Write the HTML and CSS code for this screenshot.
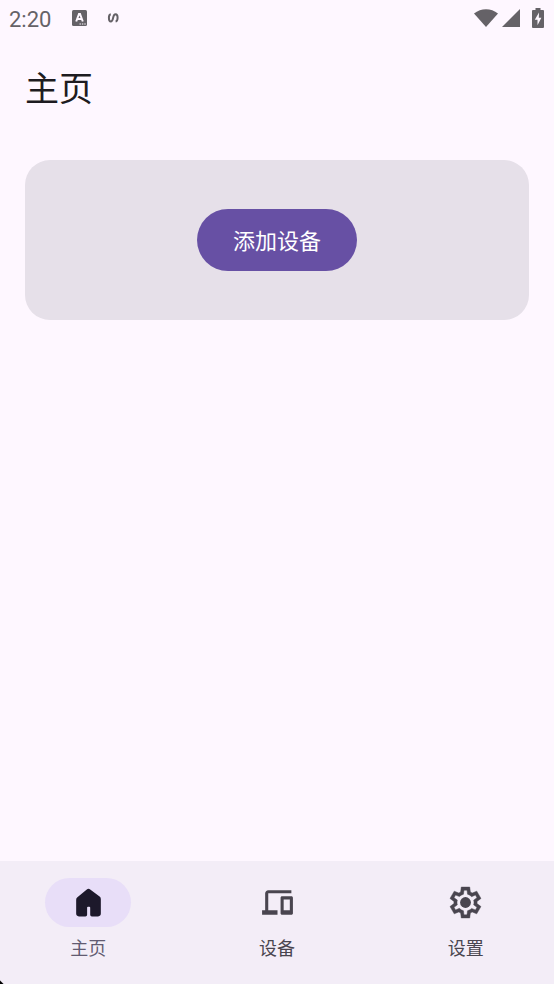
FILE: index.html
```html
<!DOCTYPE html>
<html lang="zh-CN">
<head>
<meta charset="utf-8">
<meta name="viewport" content="width=device-width, initial-scale=1">
<title>主页</title>
<link rel="stylesheet" href="styles.css">
</head>
<body>
<div class="status-bar">
  <span class="clock">2:20</span>
  <svg class="notice-app" viewBox="0 0 16 16" aria-hidden="true">
    <rect x="1" y="0" width="15" height="16" rx="1.5" fill="currentColor"/>
    <path d="M5.200 11.500 8 4h1L11.800 11.500M6.200 9h4.600" fill="none" stroke="#fef7ff" stroke-width="2"/>
    <path d="M8.500 14h1.400M10.900 14h1.400M13.300 14h1.400" stroke="#fef7ff" stroke-width="1.200"/>
  </svg>
  <svg class="notice-s" viewBox="0 0 12 10" aria-hidden="true">
    <path d="M3.800 1.200C2 1.400 1.900 3 1.900 4.800 1.900 7.200 2.500 8.500 3.800 8.500 5.400 8.500 5.700 7 6.100 4.900 6.500 2.800 7 1.300 8.600 1.300 10.200 1.300 10.600 2.900 10.600 4.800 10.600 7 10.300 8.200 8.600 8.500" fill="none" stroke="currentColor" stroke-width="2"/>
  </svg>
  <div class="indicators">
    <svg class="wifi" viewBox="0 0 24 18" aria-hidden="true"><path d="M0 4.500C7-1.300 17-1.300 24 4.500L12 18Z" fill="currentColor"/></svg>
    <svg class="signal" viewBox="0 0 18 18" aria-hidden="true"><path d="M18 0V18H0Z" fill="currentColor"/></svg>
    <svg class="battery" viewBox="0 0 12 20" aria-hidden="true"><path d="M3.500 0h5v2H11q1 0 1 1V19q0 1-1 1H1q-1 0-1-1V3q0-1 1-1h2.500Z" fill="currentColor"/><path d="M7 4.500 2.800 11.700H5.500V17.300L9.400 9.700H6.800Z" fill="#fef7ff"/></svg>
  </div>
</div>
<header class="top-bar"><h1>主页</h1></header>
<main>
  <section class="card"><button class="add-button" type="button">添加设备</button></section>
</main>
<nav class="nav-bar">
  <a class="nav-item active" href="#home" aria-current="page">
    <span class="indicator"><svg class="icon" viewBox="0 0 24 24" aria-hidden="true"><path d="M4 10.200Q4 9.200 4.800 8.600L10.900 3.500Q12 2.700 13.100 3.500L19.200 8.100Q20 8.700 20 9.700V19.200Q20 21 18.200 21H14.200Q13.100 21 13.100 19.900V15.300Q13.100 14.700 12.500 14.700H11.700Q11.100 14.700 11.100 15.300V19.900Q11.100 21 10 21H5.800Q4 21 4 19.200Z" fill="currentColor"/></svg></span>
    <span class="label">主页</span>
  </a>
  <a class="nav-item" href="#devices">
    <span class="indicator"><svg class="icon" viewBox="0 0 24 24" aria-hidden="true"><path fill="currentColor" fill-rule="evenodd" d="M2 20v-3h2V6c0-1.100.9-2 2-2h15v2H6v11h6v3ZM15 20c-.6 0-1-.4-1-1V9c0-.6.4-1 1-1h6c.6 0 1 .4 1 1v10c0 .6-.4 1-1 1ZM16 17h4v-7h-4Z"/></svg></span>
    <span class="label">设备</span>
  </a>
  <a class="nav-item" href="#settings">
    <span class="indicator"><svg class="icon" viewBox="0 0 24 24" aria-hidden="true"><path fill="currentColor" fill-rule="evenodd" d="M9.250 22l-.4-3.200c-.217-.083-.421-.183-.612-.3a8.300 8.300 0 0 1-.563-.375L4.700 19.375l-2.750-4.750 2.575-1.950A2.400 2.400 0 0 1 4.500 12.338v-.675c0-.108.008-.221.025-.338L1.950 9.375l2.750-4.750 2.975 1.250c.183-.133.375-.258.575-.375.2-.117.4-.217.6-.3l.4-3.200h5.500l.4 3.200c.217.083.421.183.613.3.191.117.379.242.562.375l2.975-1.250 2.750 4.750-2.575 1.950c.017.117.025.23.025.338v.675c0 .108-.017.22-.05.337l2.575 1.950-2.750 4.750-2.950-1.250a6.800 6.800 0 0 1-.575.375c-.2.117-.4.217-.6.3l-.4 3.200ZM11 20h1.975l.35-2.650c.517-.133.996-.329 1.438-.587a5.900 5.900 0 0 0 1.212-.938l2.475 1.025.975-1.700-2.150-1.625c.083-.233.142-.48.175-.738a6.200 6.200 0 0 0 0-1.575 3.600 3.600 0 0 0-.175-.737l2.150-1.625-.975-1.700-2.475 1.050a5.500 5.500 0 0 0-1.212-.963 5.800 5.800 0 0 0-1.438-.587L13 4h-1.975l-.35 2.650c-.517.133-.996.329-1.438.588a5.900 5.900 0 0 0-1.212.937L5.550 7.150l-.975 1.700 2.150 1.600c-.083.25-.142.5-.175.75a6.200 6.200 0 0 0 0 1.575c.033.25.092.5.175.75l-2.150 1.625.975 1.700 2.475-1.050c.383.4.787.72 1.212.963.442.258.921.454 1.438.587Z" stroke="currentColor" stroke-width="0.3"/><circle cx="12" cy="12" r="3.500" fill="currentColor"/></svg></span>
    <span class="label">设置</span>
  </a>
</nav>
</body>
</html>
```
FILE: styles.css
```css
* {
  box-sizing: border-box;
}

body {
  margin: 0;
  min-height: 100vh;
  display: flex;
  flex-direction: column;
  background: #fef7ff;
  color: #1d1b20;
  font-family: Roboto, "Noto Sans CJK SC", sans-serif;
}

.status-bar {
  display: flex;
  align-items: center;
  height: 36px;
  padding: 0 10px 0 9px;
  color: #656267;
}

.clock {
  padding-top: 3px;
  font-size: 22px;
  line-height: 36px;
}

.notice-app {
  width: 16px;
  height: 16px;
  margin-left: 20px;
}

.notice-s {
  width: 12px;
  height: 10px;
  margin-left: 20px;
}

.indicators {
  display: flex;
  align-items: center;
  margin-left: auto;
}

.wifi {
  width: 24px;
  height: 18px;
}

.signal {
  width: 18px;
  height: 18px;
  margin-left: 4px;
}

.battery {
  width: 12px;
  height: 20px;
  margin-left: 12px;
}

.top-bar {
  display: flex;
  align-items: center;
  height: 100px;
  padding: 6px 25px 0;
}

h1 {
  margin: 0;
  font-size: 34px;
  font-weight: 400;
  line-height: 44px;
}

main {
  flex: 1;
  padding: 24px 25px;
}

.card {
  display: flex;
  justify-content: center;
  padding: 49px 24px;
  border-radius: 25px;
  background: #e6e0e9;
}

.add-button {
  height: 62px;
  padding: 0 36px 2px;
  border: 0;
  border-radius: 31px;
  background: #6750a4;
  color: #fff;
  font: inherit;
  font-size: 22px;
}

.nav-bar {
  display: flex;
  gap: 12px;
  height: 123px;
  background:
    linear-gradient(45deg, #000 2px, transparent 3px),
    #f3edf7;
}

.nav-item {
  flex: 1;
  display: flex;
  flex-direction: column;
  align-items: center;
  gap: 9px;
  padding-top: 17px;
  color: #49454f;
  text-decoration: none;
}

.indicator {
  display: flex;
  align-items: center;
  justify-content: center;
  width: 86px;
  height: 49px;
  border-radius: 25px;
}

.active .indicator {
  background: #e8def8;
  color: #1d192b;
}

.active .label {
  color: #625b71;
}

.icon {
  width: 37px;
  height: 37px;
}

.label {
  font-size: 18px;
  line-height: 26px;
}
```
